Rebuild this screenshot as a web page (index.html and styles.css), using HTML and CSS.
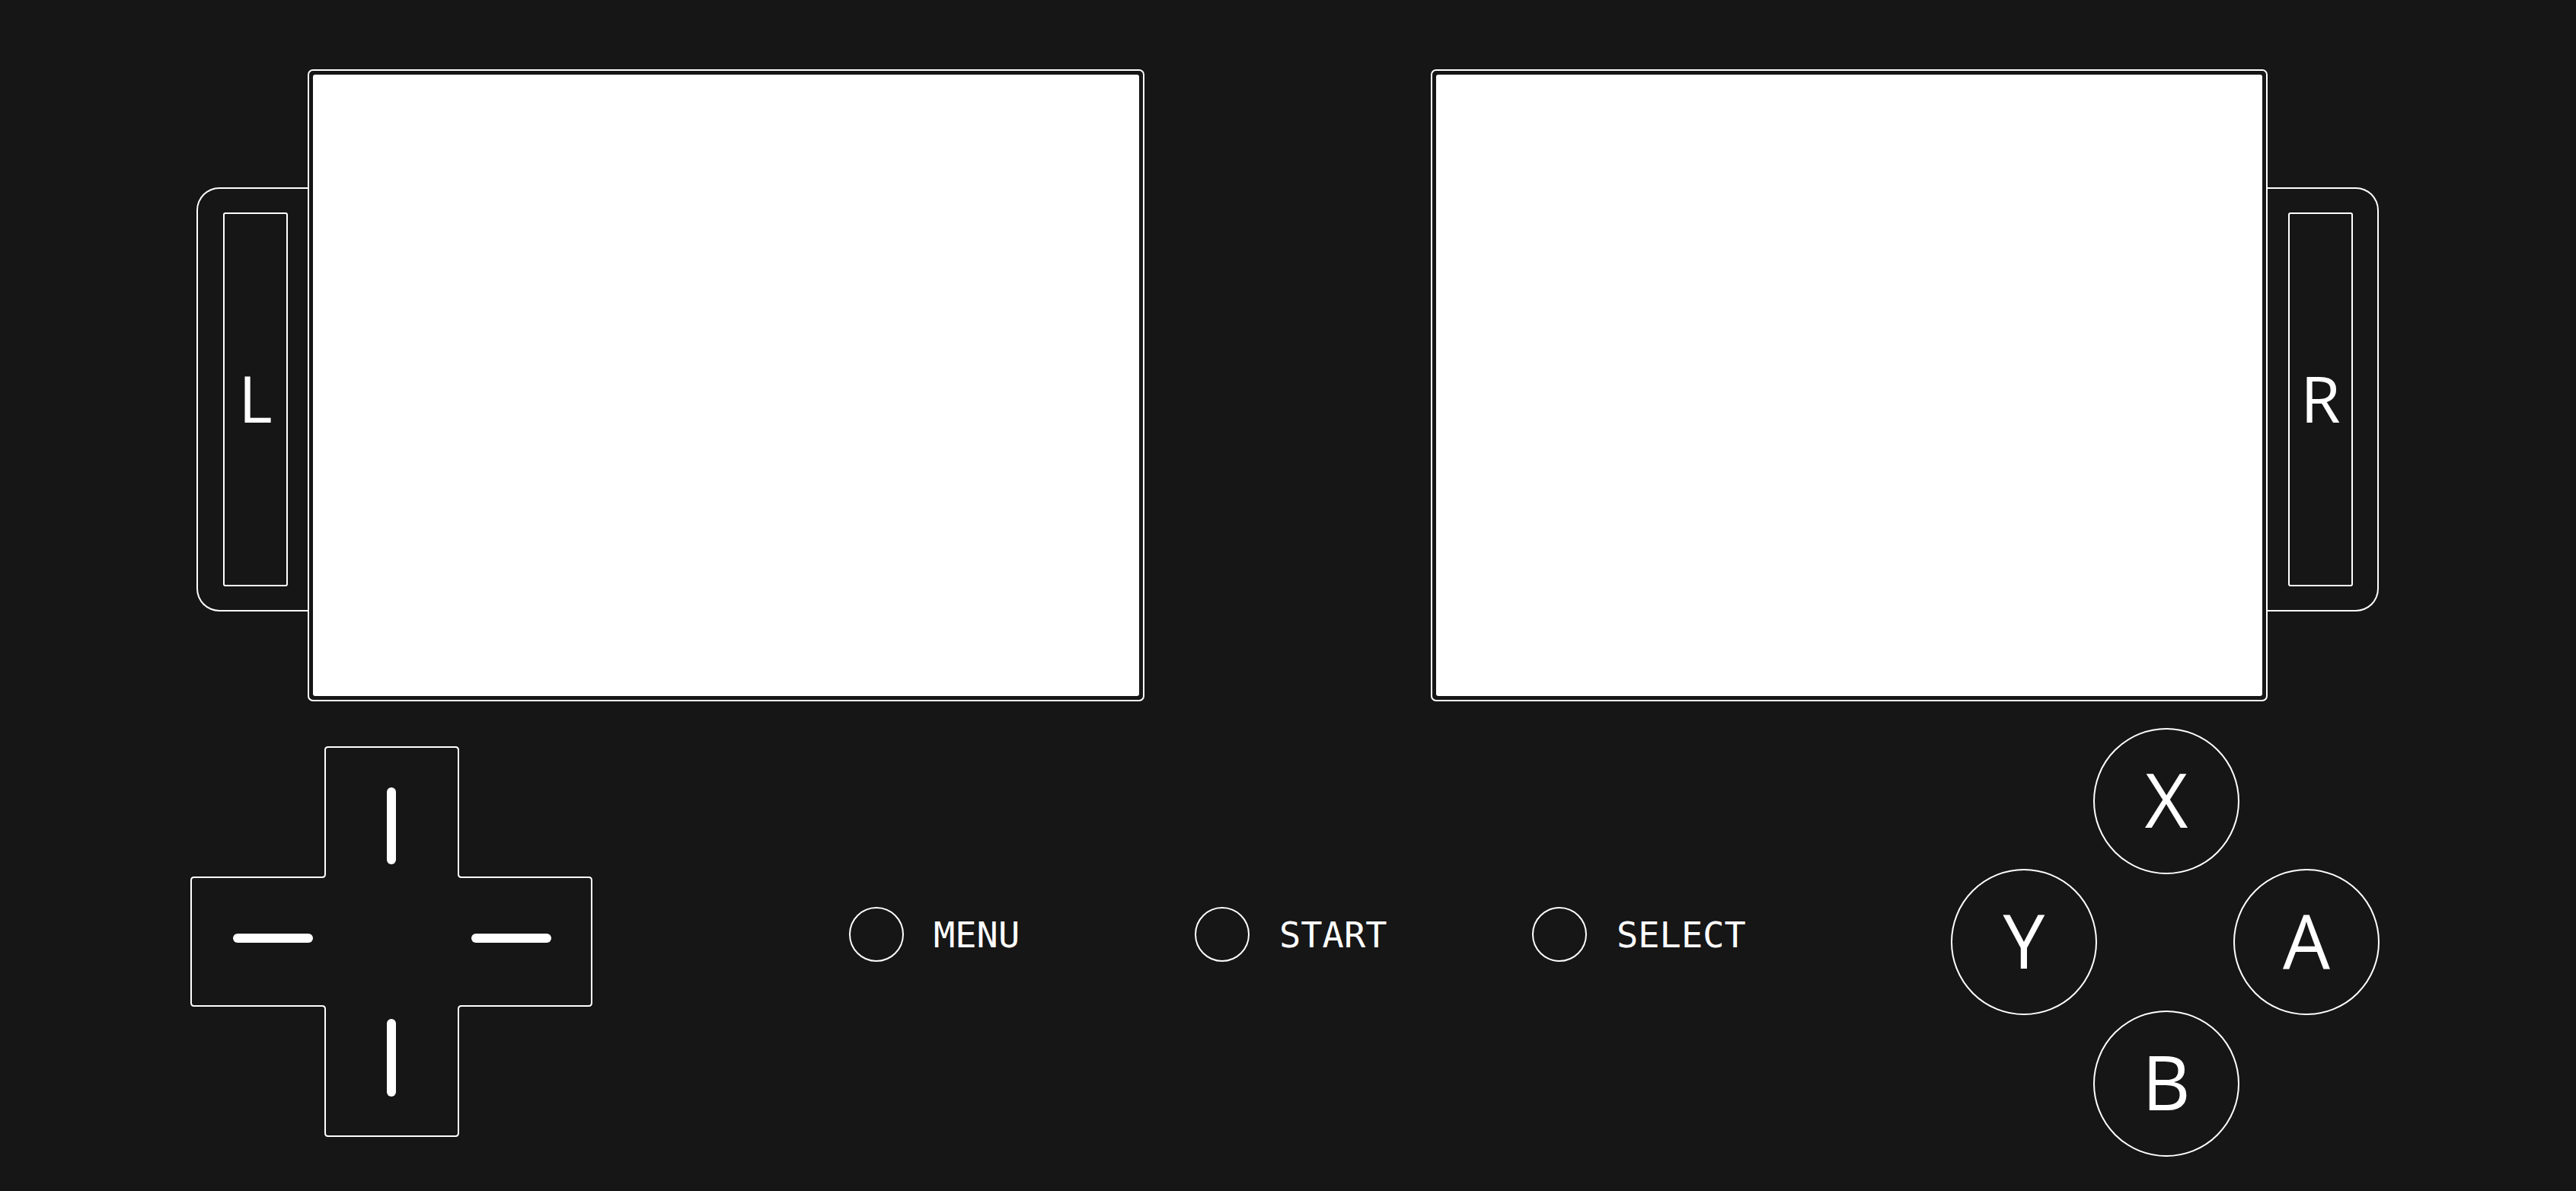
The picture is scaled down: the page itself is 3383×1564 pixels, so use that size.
FILE: index.html
```html
<!DOCTYPE html>
<html lang="en">
<head>
  <meta charset="UTF-8">
  <meta name="viewport" content="width=device-width, initial-scale=1.0">
  <title>Handheld Layout</title>
  <link rel="stylesheet" href="styles.css">
</head>
<body>
  <div class="console">
    <div class="top">
      <div class="unit">
        <div class="shoulder left">
          <div class="trigger">L</div>
        </div>
        <div class="screen"><div class="glass"></div></div>
      </div>

      <div class="unit">
        <div class="screen"><div class="glass"></div></div>
        <div class="shoulder right">
          <div class="trigger">R</div>
        </div>
      </div>
    </div>

    <div class="bottom">
      <svg class="dpad" width="528" height="513" viewBox="0 0 528 513">
        <path class="dpad-outline" d="M 181 1 H 348 Q 352 1 352 5 V 168 Q 352 172 356 172 H 523 Q 527 172 527 176 V 337 Q 527 341 523 341 H 356 Q 352 341 352 345 V 508 Q 352 512 348 512 H 181 Q 177 512 177 508 V 345 Q 177 341 173 341 H 5 Q 1 341 1 337 V 176 Q 1 172 5 172 H 173 Q 177 172 177 168 V 5 Q 177 1 181 1 Z"/>
        <line class="dpad-mark" x1="264" y1="60" x2="264" y2="149"/>
        <line class="dpad-mark" x1="264" y1="364" x2="264" y2="454"/>
        <line class="dpad-mark" x1="62" y1="252" x2="155" y2="252"/>
        <line class="dpad-mark" x1="375" y1="252" x2="468" y2="252"/>
      </svg>

      <div class="system">
        <div class="sys-btn"><span class="dot"></span><span class="label">MENU</span></div>
        <div class="sys-btn"><span class="dot"></span><span class="label">START</span></div>
        <div class="sys-btn"><span class="dot"></span><span class="label">SELECT</span></div>
      </div>

      <div class="face">
        <div class="face-btn btn-x">X</div>
        <div class="face-btn btn-y">Y</div>
        <div class="face-btn btn-a">A</div>
        <div class="face-btn btn-b">B</div>
      </div>
    </div>
  </div>
</body>
</html>
```

FILE: styles.css
```css
html, body {
  margin: 0;
  padding: 0;
}
body {
  background-color: #161616;
  color: #fff;
  font-family: 'Open Sans', sans-serif;
  width: 3383px;
  height: 1564px;
  overflow: hidden;
}
.console {
  display: flex;
  flex-direction: column;
}
.top {
  display: flex;
  justify-content: space-between;
  padding: 91px 259px 0 258px;
}
.unit {
  display: flex;
  align-items: flex-start;
}
.screen {
  box-sizing: border-box;
  width: 1099px;
  height: 830px;
  border: 2px solid #fff;
  border-radius: 7px;
  padding: 5px;
}
.glass {
  height: 100%;
  background: #fff;
  border-radius: 3px;
}
.shoulder {
  box-sizing: border-box;
  display: flex;
  width: 146px;
  height: 557px;
  margin-top: 155px;
  border: 2px solid #fff;
  padding: 31px 0;
}
.shoulder.left {
  border-right: none;
  border-radius: 30px 0 0 30px;
  padding-left: 33px;
}
.shoulder.right {
  border-left: none;
  border-radius: 0 30px 30px 0;
  justify-content: flex-end;
  padding-right: 32px;
}
.trigger {
  box-sizing: border-box;
  width: 85px;
  height: 491px;
  border: 2px solid #fff;
  border-radius: 3px;
  display: flex;
  align-items: center;
  justify-content: center;
  font-size: 85px;
  line-height: 1;
  padding-bottom: 4px;
}
.bottom {
  display: flex;
  align-items: flex-start;
  padding-left: 250px;
  padding-right: 258px;
}
.dpad {
  display: block;
  margin-top: 59px;
}
.dpad-outline {
  fill: none;
  stroke: #fff;
  stroke-width: 2;
}
.dpad-mark {
  stroke: #fff;
  stroke-width: 12;
  stroke-linecap: round;
}
.system {
  display: grid;
  grid-template-columns: 454px 443px auto;
  margin-top: 270px;
  margin-left: 337px;
}
.sys-btn {
  display: flex;
  align-items: center;
  gap: 39px;
}
.dot {
  box-sizing: border-box;
  width: 72px;
  height: 72px;
  border: 2px solid #fff;
  border-radius: 50%;
}
.label {
  font-family: 'DejaVu Sans Mono', monospace;
  font-size: 47px;
}
.face {
  display: grid;
  grid-template-columns: 187px 184px 192px;
  grid-template-rows: 185px 186px 192px;
  margin-top: 35px;
  margin-left: auto;
}
.face-btn {
  box-sizing: border-box;
  width: 192px;
  height: 192px;
  border: 2px solid #fff;
  border-radius: 50%;
  display: flex;
  align-items: center;
  justify-content: center;
  font-size: 98px;
  line-height: 1;
  padding-bottom: 7px;
}
.btn-x { grid-column: 2; grid-row: 1; }
.btn-y { grid-column: 1; grid-row: 2; }
.btn-a { grid-column: 3; grid-row: 2; }
.btn-b { grid-column: 2; grid-row: 3; }
```
